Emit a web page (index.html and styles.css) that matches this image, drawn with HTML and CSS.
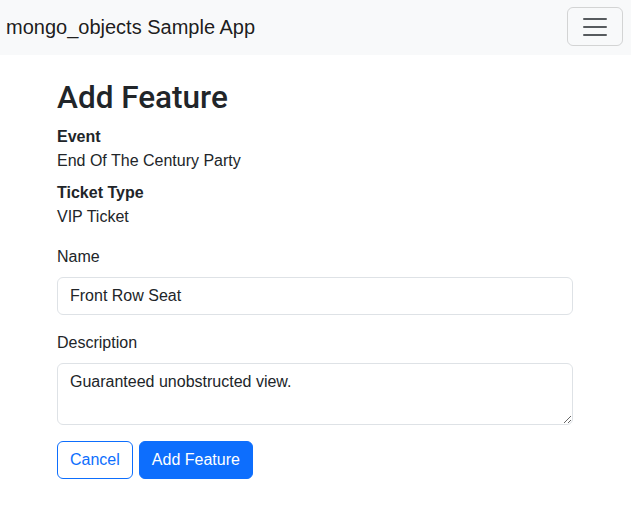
FILE: index.html
```html
<!DOCTYPE html>
<html lang="en">
<head>
<meta charset="utf-8">
<title>Add Feature</title>
<link rel="stylesheet" href="styles.css">
</head>
<body>
<nav class="navbar">
  <a class="brand" href="#">mongo_objects Sample App</a>
  <button class="toggler" type="button" aria-label="Toggle navigation">
    <svg class="toggler-icon" viewBox="0 0 30 30" width="30" height="30" aria-hidden="true">
      <path d="M4 7h22M4 15h22M4 23h22" stroke="rgba(33,37,41,0.75)" stroke-width="2" stroke-linecap="round" stroke-miterlimit="10" fill="none"/>
    </svg>
  </button>
</nav>
<main class="container">
  <h1 class="title">Add Feature</h1>
  <dl class="details">
    <dt>Event</dt>
    <dd>End Of The Century Party</dd>
    <dt>Ticket Type</dt>
    <dd>VIP Ticket</dd>
  </dl>
  <form class="form">
    <div class="field">
      <label class="label" for="name">Name</label>
      <input class="control" id="name" type="text" value="Front Row Seat">
    </div>
    <div class="field">
      <label class="label" for="desc">Description</label>
      <textarea class="control textarea" id="desc" rows="2">Guaranteed unobstructed view.</textarea>
    </div>
    <div class="actions">
      <a class="btn btn-outline" href="#">Cancel</a>
      <button class="btn btn-primary" type="submit">Add Feature</button>
    </div>
  </form>
</main>
</body>
</html>
```

FILE: styles.css
```css
* { box-sizing: border-box; }

html, body {
  margin: 0;
  padding: 0;
}

body {
  font-family: "Liberation Sans", Arial, sans-serif;
  font-size: 16px;
  line-height: 1.5;
  color: #212529;
  background: #fff;
}

.navbar {
  display: flex;
  align-items: flex-start;
  justify-content: space-between;
  background: #f8f9fa;
  padding: 7px 8px 0 6px;
  height: 55px;
}

.brand {
  font-size: 20px;
  line-height: 30px;
  margin-top: 5px;
  color: rgba(0, 0, 0, 0.9);
  text-decoration: none;
}

.toggler {
  display: flex;
  align-items: center;
  justify-content: center;
  width: 56px;
  height: 39px;
  padding: 4px 12px;
  background: transparent;
  border: 1px solid rgba(0, 0, 0, 0.15);
  border-radius: 6px;
}

.toggler-icon {
  display: block;
}

.container {
  width: 540px;
  margin: 0 auto;
  padding: 24px 12.5px 0 11.5px;
}

.title {
  font-family: Roboto, "Liberation Sans", sans-serif;
  font-size: 31.5px;
  font-weight: 500;
  line-height: 1.2;
  margin: 0 0 8px;
}

.details {
  margin: 0 0 16px;
}

.details dt {
  font-weight: 700;
}

.details dd {
  margin: 0 0 8px;
}

.details dd:last-child {
  margin-bottom: 0;
}

.form {
  display: flex;
  flex-direction: column;
  gap: 16px;
}

.field {
  display: flex;
  flex-direction: column;
}

.label {
  margin-bottom: 8px;
}

.control {
  display: block;
  width: 100%;
  font-family: inherit;
  font-size: 16px;
  line-height: 1.5;
  color: #212529;
  background: #fff;
  border: 1px solid #dee2e6;
  border-radius: 6px;
  padding: 6px 12px;
  margin: 0;
}

.textarea {
  height: 62px;
  resize: vertical;
}

.actions {
  display: flex;
  gap: 6px;
}

.btn {
  display: inline-block;
  font-family: inherit;
  font-size: 16px;
  line-height: 1.5;
  padding: 6px 12px;
  border-radius: 6px;
  border: 1px solid #0d6efd;
  text-decoration: none;
  cursor: pointer;
}

.btn-outline {
  color: #0d6efd;
  background: #fff;
}

.btn-primary {
  color: #fff;
  background: #0d6efd;
}
```
